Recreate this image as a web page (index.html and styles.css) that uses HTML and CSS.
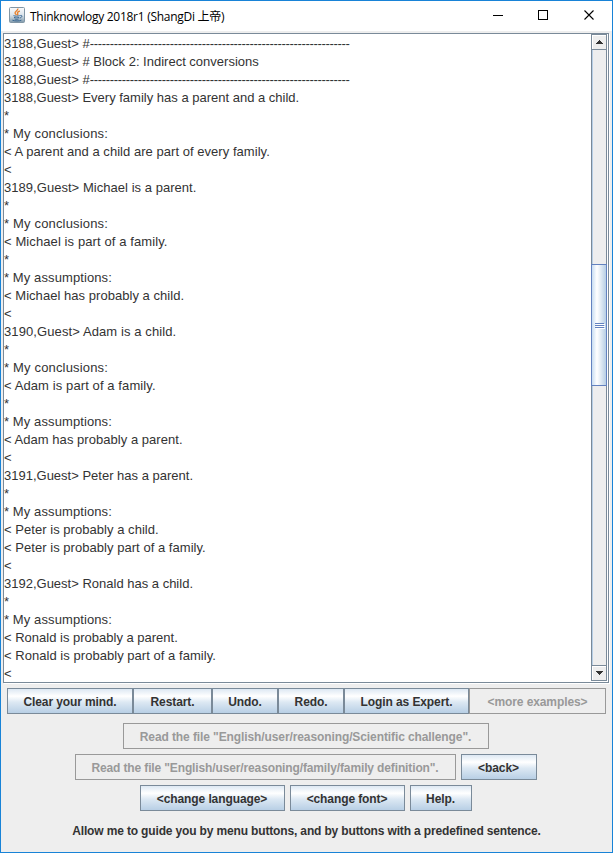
FILE: index.html
```html
<!DOCTYPE html>
<html lang="en">
<head>
<meta charset="utf-8">
<title>Thinknowlogy 2018r1</title>
<link rel="stylesheet" href="styles.css">
</head>
<body>
<div class="window">
  <header class="titlebar">
    <svg class="java" width="16" height="16" viewBox="0 0 16 16">
      <defs><linearGradient id="tile" x1="0" y1="0" x2="0" y2="1"><stop offset="0" stop-color="#fafbfc"/><stop offset=".5" stop-color="#dce5ec"/><stop offset="1" stop-color="#7f99ab"/></linearGradient></defs>
      <rect x=".5" y=".5" width="15" height="15" rx="1" fill="url(#tile)" stroke="#8196a5"/>
      <path d="M8.800 1.500C9.400 3.600 5.600 4.400 6.100 6.100c.2.900 1 1.300 1.400 2M10.800 4C8.700 4.800 8 5.600 8.700 6.600c.4.600.2 1-.4 1.500" fill="none" stroke="#e8822e" stroke-width="1.400"/>
      <path d="M4.500 8.600c1.500.8 4.600.6 6.200 0M5 10.400c1.500.6 3.700.6 5.200 0M5.600 12c1.300.5 2.700.5 4 0M3.400 13.200c2.500 1 7 .9 9 0M11.300 8.500c2-.7 2.600 1.600-.6 2.600" fill="none" stroke="#2f5f8c" stroke-width=".9"/>
    </svg>
    <h1 class="title">Thinknowlogy 2018r1 (ShangDi <span class="cjk">上帝</span>)</h1>
    <svg class="controls" width="103" height="12" viewBox="0 0 103 12" fill="none" stroke="#000">
      <path d="M0 5.500h10M45.500 .5h9v9h-9z" shape-rendering="crispEdges"/>
      <path d="M91.500 .5l9 9M100.500 .5l-9 9" stroke-width="1.100"/>
    </svg>
  </header>
  <main class="console">
<pre class="log">3188,Guest&gt; #<span class="rule">-----------------------------------------------------------------</span>
3188,Guest&gt; # Block 2: Indirect conversions
3188,Guest&gt; #<span class="rule">-----------------------------------------------------------------</span>
3188,Guest&gt; Every family has a parent and a child.
*
<span class="wide">* My conclusions:</span>
<span class="open">&lt; A parent and a child are part of every family.</span>
&lt;
<span class="open">3189,Guest&gt; Michael is a parent.</span>
*
<span class="wide">* My conclusions:</span>
<span class="loose">&lt; Michael is part of a family.</span>
*
<span class="loose">* My assumptions:</span>
<span class="open">&lt; Michael has probably a child.</span>
&lt;
<span class="loose">3190,Guest&gt; Adam is a child.</span>
*
<span class="wide">* My conclusions:</span>
<span class="loose">&lt; Adam is part of a family.</span>
*
<span class="loose">* My assumptions:</span>
<span class="open">&lt; Adam has probably a parent.</span>
&lt;
3191,Guest&gt; Peter has a parent.
*
<span class="loose">* My assumptions:</span>
<span class="open">&lt; Peter is probably a child.</span>
<span class="open">&lt; Peter is probably part of a family.</span>
&lt;
3192,Guest&gt; Ronald has a child.
*
<span class="loose">* My assumptions:</span>
&lt; Ronald is probably a parent.
<span class="open">&lt; Ronald is probably part of a family.</span>
&lt;</pre>
    <div class="scrollbar">
      <div class="arrow up"><svg width="9" height="4" viewBox="0 0 9 4"><path d="M4 0h1v1h1v1h1v1h1v1H1V3h1V2h1V1h1z" fill="#333"/></svg></div>
      <div class="track"><div class="thumb"><i></i><i></i><i></i></div></div>
      <div class="arrow down"><svg width="9" height="4" viewBox="0 0 9 4"><path d="M1 0h7v1H7v1H6v1H5v1H4V3H3V2H2V1H1z" fill="#333"/></svg></div>
    </div>
  </main>
  <nav class="toolbar">
    <button class="w126">Clear your mind.</button><button class="w79">Restart.</button><button class="w66">Undo.</button><button class="w66">Redo.</button><button class="w125">Login as Expert.</button><button class="w137" disabled>&lt;more examples&gt;</button>
  </nav>
  <section class="choices">
    <div class="row"><button class="w366" disabled>Read the file "English/user/reasoning/Scientific challenge".</button></div>
    <div class="row"><button class="w381" disabled>Read the file "English/user/reasoning/family/family definition".</button><button class="w76">&lt;back&gt;</button></div>
    <div class="row"><button class="w145">&lt;change language&gt;</button><button class="w115">&lt;change font&gt;</button><button class="w62">Help.</button></div>
  </section>
  <p class="status">Allow me to guide you by menu buttons, and by buttons with a predefined sentence.</p>
</div>
</body>
</html>
```
FILE: styles.css
```css
* { box-sizing: border-box; }
body { margin: 0; font-family: "Liberation Sans", Arial, sans-serif; color: #333; }
.window { width: 613px; height: 853px; border: 1px solid #1883d7; background: #eee; overflow: hidden; }
.titlebar { height: 30px; background: #fff; display: flex; align-items: center; padding: 0 16px 0 8px; }
.java { margin-top: -2px; }
.title { margin: 0 0 0 5px; font: 12px/30px "Open Sans", "Noto Sans", sans-serif; color: #000; letter-spacing: -0.28px; white-space: nowrap; }
.cjk { font-family: "Noto Sans CJK SC", sans-serif; }
.controls { margin-left: auto; }
.console { display: flex; height: 650px; margin: 2px 3px 0 2px; border: 1px solid #7a8a99; box-shadow: 1px 1px 0 #fff; background: #fff; }
.log { flex: 1; margin: 0; padding-top: 1px; overflow: hidden; font: 13px/18px "Liberation Sans", Arial, sans-serif; }
.rule { letter-spacing: -0.33px; }
.open { letter-spacing: 0.04px; }
.loose { letter-spacing: 0.1px; }
.wide { letter-spacing: 0.17px; }
.scrollbar { width: 16px; margin: 0 1px 1px 0; display: flex; flex-direction: column; border: 1px solid #7a8a99; background: #eee; }
.arrow { height: 15px; display: flex; align-items: center; justify-content: center; box-shadow: inset 1px 1px 0 #fff; }
.up { border-bottom: 1px solid #7a8a99; }
.down { border-top: 1px solid #7a8a99; }
.track { flex: 1; padding-top: 214px; border-left: 1px solid #b8cfe5; }
.thumb { height: 122px; margin: 0 -1px 0 -2px; border: 1px solid #6382bf; background: linear-gradient(90deg, #c8ddf2 0, #fff 35%, #b8cfe5 100%); display: flex; flex-direction: column; align-items: center; justify-content: center; gap: 1px; }
.thumb i { width: 9px; height: 1px; background: #6382bf; box-shadow: 1px 1px 0 #fff; }
button { height: 26px; padding: 2px 0 0; border: 1px solid #7a8a99; background: linear-gradient(#dde8f3 0, #fff 30%, #dce8f3 55%, #b8cfe5 100%); font: bold 12px/22px "Liberation Sans", Arial, sans-serif; letter-spacing: -0.1px; color: #333; white-space: nowrap; }
button:disabled { border-color: #999; background: #eee; color: #999; }
.toolbar { display: flex; margin: 5px 0 0 6px; }
.choices { display: flex; flex-direction: column; gap: 5px; margin: 9px 2px 0 0; }
.row { display: flex; justify-content: center; gap: 5px; }
.w62 { width: 62px; } .w66 { width: 66px; } .w76 { width: 76px; } .w79 { width: 79px; }
.w115 { width: 115px; } .w125 { width: 125px; } .w126 { width: 126px; } .w137 { width: 137px; }
.w145 { width: 145px; } .w366 { width: 366px; } .w381 { width: 381px; letter-spacing: -0.13px; }
.status { margin: 11px 0 0; text-align: center; font: bold 12px/18px "Liberation Sans", Arial, sans-serif; letter-spacing: -0.15px; white-space: nowrap; }
```
